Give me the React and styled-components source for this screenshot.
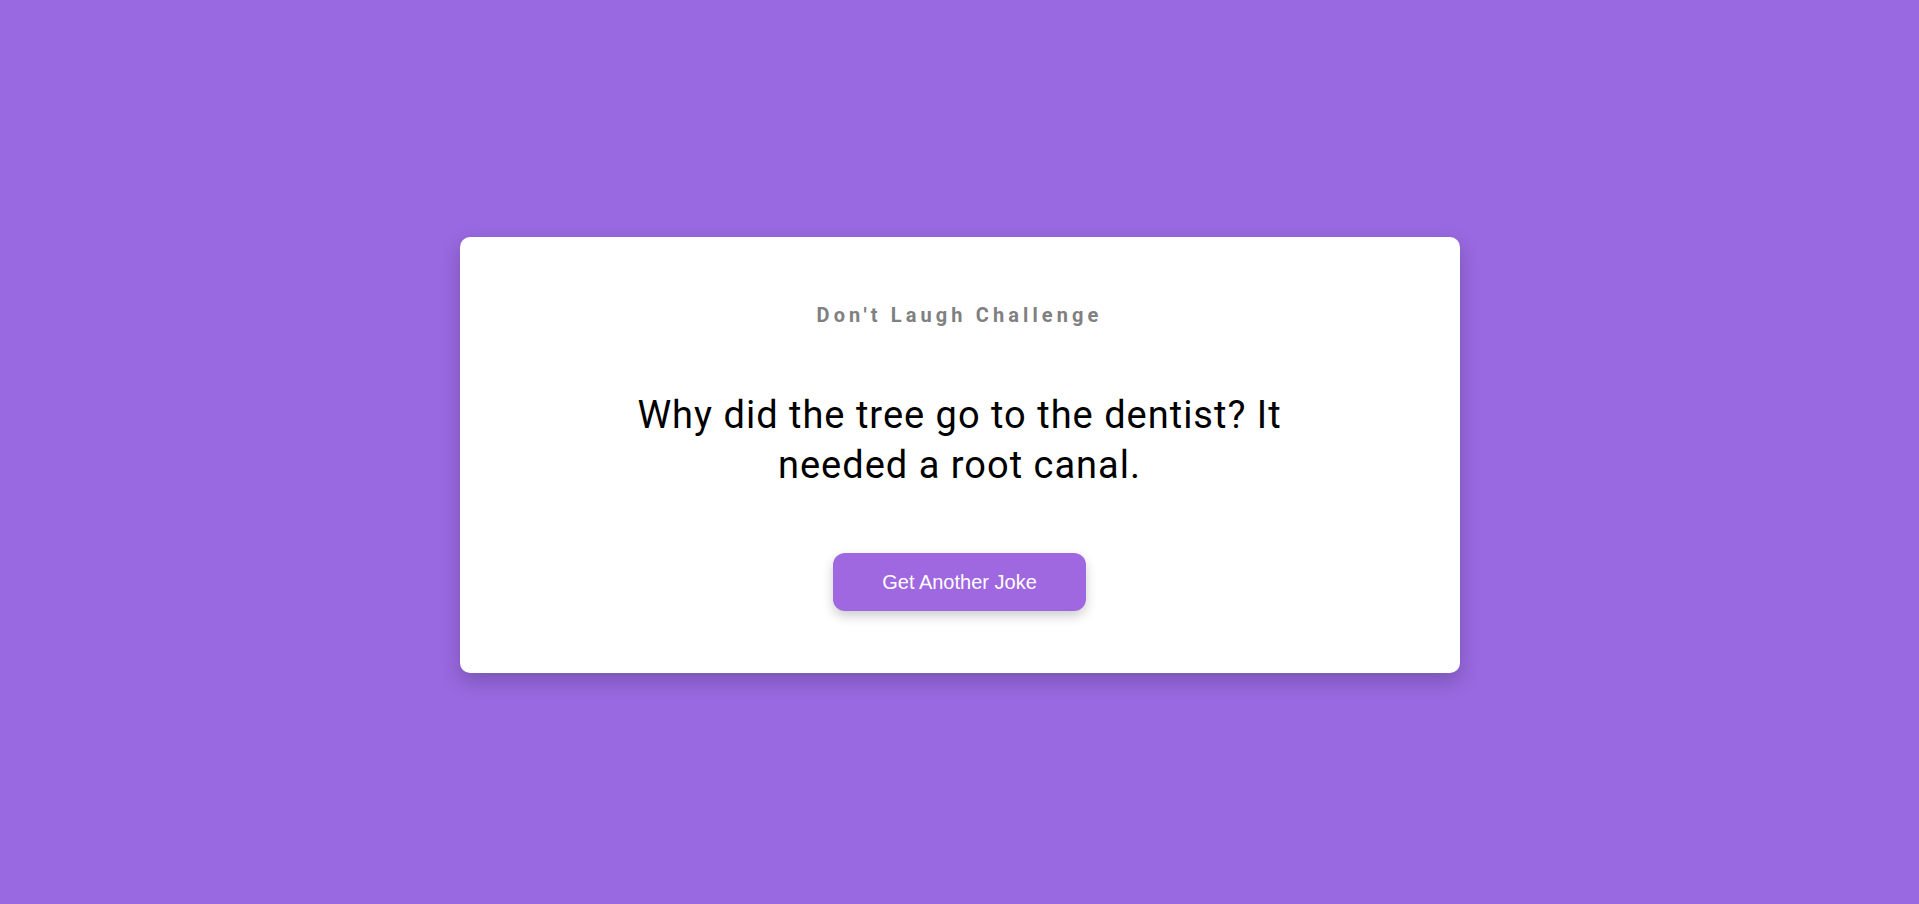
import React, { useState } from 'react';
import styled, { createGlobalStyle } from 'styled-components';

const jokes = [
    'Why did the tree go to the dentist? It needed a root canal.',
    'Why did the scarecrow win an award? He was outstanding in his field.',
    'What do you call fake spaghetti? An impasta.',
];

const GlobalStyle = createGlobalStyle`
    html, body {
        margin: 0;
        padding: 0;
    }
    body {
        background: #9869e0;
        font-family: Roboto, "Liberation Sans", sans-serif;
    }
`;

// styles
const Page = styled.div`
    min-height: 100vh;
    box-sizing: border-box;
    padding-top: 6px;
    display: flex;
    align-items: center;
    justify-content: center;
`;

const Card = styled.div`
    width: 1000px;
    box-sizing: border-box;
    padding: 66px 40px 62px;
    background: #ffffff;
    border-radius: 10px;
    box-shadow: 0 8px 20px rgba(0, 0, 0, 0.2);
    display: flex;
    flex-direction: column;
    align-items: center;
    text-align: center;
`;

const Title = styled.h3`
    margin: 0 0 63px;
    font-size: 20px;
    font-weight: 700;
    line-height: 24px;
    letter-spacing: 4.1px;
    color: #808080;
`;

const Joke = styled.p`
    margin: 0 0 63px;
    max-width: 700px;
    font-size: 38px;
    line-height: 50px;
    letter-spacing: 1px;
    color: #000000;
`;

const Button = styled.button`
    height: 58px;
    padding: 0 49px;
    border: none;
    border-radius: 12px;
    background: #a068e0;
    color: #ffffff;
    font-family: "Liberation Sans", Arial, sans-serif;
    font-size: 20px;
    box-shadow: 0 5px 12px rgba(0, 0, 0, 0.2);
    cursor: pointer;
`;

const App = () => {
    const [index, setIndex] = useState(0);

    return (
        <Page>
            <GlobalStyle />
            <Card>
                <Title>Don't Laugh Challenge</Title>
                <Joke>{jokes[index]}</Joke>
                <Button onClick={() => setIndex((index + 1) % jokes.length)}>
                    Get Another Joke
                </Button>
            </Card>
        </Page>
    );
};

export default App;
